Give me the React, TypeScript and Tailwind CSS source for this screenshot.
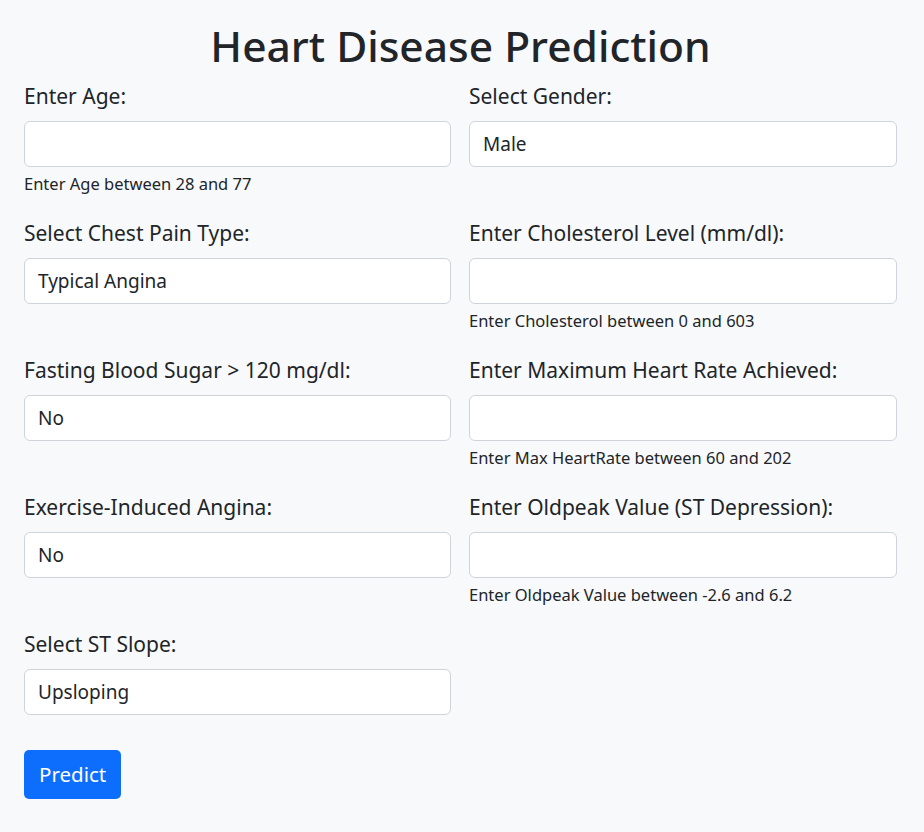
import React from "react";

type Field = {
  label: string;
  kind: "input" | "select";
  value?: string;
  help?: string;
};

const fields: Field[] = [
  { label: "Enter Age:", kind: "input", help: "Enter Age between 28 and 77" },
  { label: "Select Gender:", kind: "select", value: "Male" },
  { label: "Select Chest Pain Type:", kind: "select", value: "Typical Angina" },
  { label: "Enter Cholesterol Level (mm/dl):", kind: "input", help: "Enter Cholesterol between 0 and 603" },
  { label: "Fasting Blood Sugar > 120 mg/dl:", kind: "select", value: "No" },
  { label: "Enter Maximum Heart Rate Achieved:", kind: "input", help: "Enter Max HeartRate between 60 and 202" },
  { label: "Exercise-Induced Angina:", kind: "select", value: "No" },
  { label: "Enter Oldpeak Value (ST Depression):", kind: "input", help: "Enter Oldpeak Value between -2.6 and 6.2" },
  { label: "Select ST Slope:", kind: "select", value: "Upsloping" },
];

function FormField({ field }: { field: Field }) {
  return (
    <div className="flex flex-col">
      <label className="text-[21px] leading-[30px] mb-[10px]">{field.label}</label>
      <div className="h-[46px] bg-white border border-[#ced4da] rounded-[6px] px-[13px] flex items-center text-[19px]">
        {field.kind === "select" ? field.value : ""}
      </div>
      {field.help && <div className="mt-[5px] text-[16.5px] leading-[24px]">{field.help}</div>}
    </div>
  );
}

export default function App() {
  return (
    <div
      className="min-h-[832px] bg-[#f8f9fa] text-[#212529] pl-[24px] pr-[27px] pt-[17px]"
      style={{ fontFamily: '"Noto Sans", sans-serif' }}
    >
      <h1 className="text-center text-[42.5px] leading-[58px] font-medium mb-[6px]">Heart Disease Prediction</h1>
      <div className="grid grid-cols-[427px_428px] gap-x-[18px] gap-y-[22px]">
        {fields.map((f, i) => (
          <FormField key={i} field={f} />
        ))}
      </div>
      <button className="mt-[35px] h-[49px] px-[15px] bg-[#0d6efd] text-white text-[20.5px] rounded-[5px]">Predict</button>
    </div>
  );
}
